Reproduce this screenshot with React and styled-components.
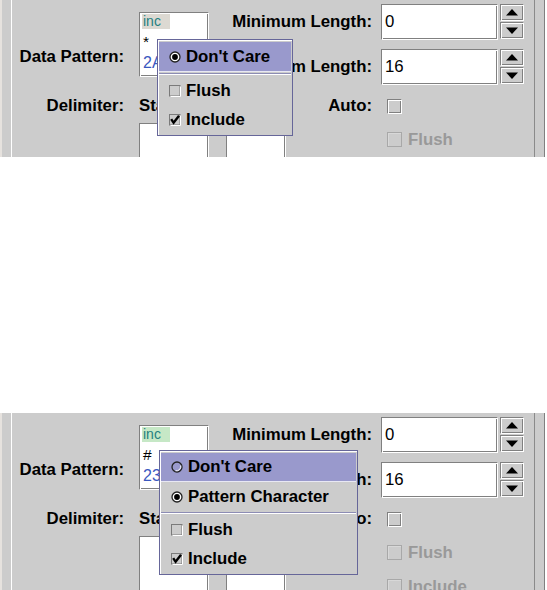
import React from "react";
import styled, { createGlobalStyle } from "styled-components";

const GlobalStyle = createGlobalStyle`
  html, body {
    margin: 0;
    padding: 0;
    background: #ffffff;
    overflow: hidden;
  }
  body {
    font-family: "Liberation Sans", Arial, sans-serif;
  }
`;

const flush3D = `
  border: 1px solid;
  border-color: #808080 #ffffff #ffffff #808080;
  box-shadow: inset 1px 1px #ffffff, inset -1px -1px #808080;
`;

const Page = styled.div`
  width: 547px;
  height: 590px;
  display: flex;
  flex-direction: column;
`;

const Gap = styled.div`
  height: ${(p) => p.$h}px;
  flex: none;
`;

const Panel = styled.div`
  position: relative;
  flex: none;
  height: ${(p) => p.$height}px;
  width: 545px;
  box-sizing: border-box;
  display: flex;
  background: #cccccc;
  border-left: 2px solid #e6e2de;
  border-right: 1px solid #808080;
  padding: 0 9px;
  overflow: hidden;
`;

const Frame = styled.div`
  width: 524px;
  box-sizing: border-box;
  border-left: 1px solid #ffffff;
  border-right: 1px solid #8a8a8a;
  padding-top: 4px;
`;

const FormGrid = styled.div`
  display: grid;
  grid-template-columns: 112px 15px 70px 17px 60px 86px 9px 143px;
  grid-template-rows: 36px 9px 36px 38px 33px 33px 60px;
`;

const Label = styled.div`
  grid-column: ${(p) => p.$col};
  grid-row: ${(p) => p.$row};
  align-self: ${(p) => (p.$top != null ? "start" : "center")};
  margin-top: ${(p) => p.$top || 0}px;
  padding-top: ${(p) => p.$pad || 0}px;
  text-align: ${(p) => p.$align || "right"};
  font-weight: bold;
  font-size: 16.8px;
  line-height: 20px;
  color: #000;
  white-space: nowrap;
`;

const ListBox = styled.div`
  grid-column: 3 / 4;
  grid-row: 1 / 4;
  align-self: start;
  margin-top: 8px;
  height: 65px;
  box-sizing: border-box;
  background: #ffffff;
  ${flush3D}
  padding: 1px 2px;
  display: flex;
  flex-direction: column;
  align-items: flex-start;
  overflow: hidden;
`;

const ListTag = styled.span`
  background: ${(p) => p.$bg};
  color: #1f8080;
  font-size: 14px;
  line-height: 15px;
  padding: 0 9px 0 1px;
`;

const ListChar = styled.span`
  margin-top: 4px;
  font-size: 15.5px;
  line-height: 17px;
  color: #000;
  padding-left: 1px;
`;

const ListHex = styled.span`
  margin-top: 4px;
  font-size: 16px;
  line-height: 17px;
  color: #3a58c0;
  padding-left: 1px;
`;

const DelimBox = styled.div`
  grid-column: ${(p) => p.$col};
  grid-row: 5 / 8;
  height: 100px;
  background: #ffffff;
  ${flush3D}
`;

const SpinnerRow = styled.div`
  grid-column: 8 / 9;
  grid-row: ${(p) => p.$row};
  display: flex;
  gap: 2px;
`;

const TextField = styled.div`
  width: 117px;
  height: 36px;
  box-sizing: border-box;
  background: #ffffff;
  ${flush3D}
  padding-left: 3px;
  display: flex;
  align-items: center;
  font-size: 16.8px;
  color: #000;
`;

const SpinButtons = styled.div`
  display: flex;
  flex-direction: column;
  gap: 1px;
  width: 24px;
`;

const SpinButton = styled.div`
  height: 17px;
  box-sizing: border-box;
  background: #cccccc;
  ${flush3D}
  display: flex;
  align-items: center;
  justify-content: center;
`;

const CheckRow = styled.div`
  grid-column: 8 / 9;
  grid-row: ${(p) => p.$row};
  align-self: center;
  margin-top: ${(p) => p.$shift || 0}px;
  padding-left: 6px;
  display: flex;
  align-items: center;
  gap: 6px;
`;

const CheckBox = styled.div`
  width: 15px;
  height: 15px;
  box-sizing: border-box;
  ${(p) =>
    p.$disabled
      ? "border: 1px solid #a8a8a8; box-shadow: inset 1px 1px #d8d8d8;"
      : flush3D}
`;

const CheckLabel = styled.span`
  font-weight: bold;
  font-size: 16.8px;
  color: ${(p) => (p.$disabled ? "#999999" : "#000")};
`;

const Popup = styled.div`
  position: absolute;
  left: ${(p) => p.$left}px;
  top: ${(p) => p.$top}px;
  width: ${(p) => p.$width}px;
  box-sizing: border-box;
  background: #cccccc;
  border: 1px solid #666699;
  box-shadow: inset 1px 1px #ffffff;
  padding: 2px 1px 1px 1px;
  z-index: 2;
`;

const MenuItem = styled.div`
  height: ${(p) => p.$h || 29}px;
  display: flex;
  align-items: center;
  gap: 5px;
  padding-left: 10px;
  background: ${(p) => (p.$selected ? "#9999cc" : "transparent")};
  border-bottom: ${(p) => (p.$selected ? "1px solid #e8e8f4" : "none")};
  box-sizing: border-box;
  font-weight: bold;
  font-size: 16.8px;
  color: #000;
  white-space: nowrap;
`;

const MenuSeparator = styled.div`
  margin: 1px 0;
  border-top: 1px solid #8c8cb4;
  border-bottom: 1px solid #ffffff;
`;

const Arrow = ({ up }) => (
  <svg width="12" height="7" viewBox="0 0 12 7">
    <polygon points={up ? "6,0 12,6.5 0,6.5" : "0,0.5 12,0.5 6,7"} fill="#000" />
  </svg>
);

const RadioIcon = ({ on }) => (
  <svg width="12" height="12" viewBox="0 0 12 12">
    <circle cx="6" cy="6" r="5" fill={on ? "#ffffff" : "none"} stroke="#222" strokeWidth="1.3" />
    {!on && <path d="M9.8 4.5 A4.6 4.6 0 0 1 4.5 9.8" fill="none" stroke="#fff" strokeWidth="1" />}
    {on && <circle cx="6" cy="6" r="2.9" fill="#000" />}
  </svg>
);

const CheckIcon = ({ on }) => (
  <svg width="12" height="12" viewBox="0 0 12 12">
    <rect x="0.5" y="0.5" width="10.5" height="10.5" fill="none" stroke="#7a7a7a" />
    <path d="M1.5 11.5 H11.5 V1.5" fill="none" stroke="#ffffff" />
    {on && (
      <path d="M2.2 5.2 L4.6 8.8 L10 1.8" fill="none" stroke="#000" strokeWidth="2.4" />
    )}
  </svg>
);

const Spinner = ({ row, value }) => (
  <SpinnerRow $row={row}>
    <TextField>{value}</TextField>
    <SpinButtons>
      <SpinButton>
        <Arrow up />
      </SpinButton>
      <SpinButton>
        <Arrow />
      </SpinButton>
    </SpinButtons>
  </SpinnerRow>
);

const PatternPanel = ({ height, tagBg, char, hex, popup }) => (
  <Panel $height={height}>
    <Frame>
      <FormGrid>
        <Label $col="1 / 2" $row="1 / 4" $top={43}>
          Data Pattern:
        </Label>
        <ListBox>
          <ListTag $bg={tagBg}>inc</ListTag>
          <ListChar>{char}</ListChar>
          <ListHex>{hex}</ListHex>
        </ListBox>

        <Label $col="5 / 7" $row="1 / 2">
          Minimum Length:
        </Label>
        <Spinner row="1 / 2" value="0" />
        <Label $col="5 / 7" $row="3 / 4">
          Maximum Length:
        </Label>
        <Spinner row="3 / 4" value="16" />

        <Label $col="1 / 2" $row="4 / 5" $pad={3}>
          Delimiter:
        </Label>
        <Label $col="3 / 4" $row="4 / 5" $pad={3} $align="left">
          Start
        </Label>
        <Label $col="5 / 6" $row="4 / 5" $pad={3} $align="left">
          End
        </Label>
        <Label $col="6 / 7" $row="4 / 5" $pad={3}>
          Auto:
        </Label>
        <CheckRow $row="4 / 5" $shift={4}>
          <CheckBox />
        </CheckRow>

        <DelimBox $col="3 / 4" />
        <DelimBox $col="5 / 6" />

        <CheckRow $row="5 / 6">
          <CheckBox $disabled />
          <CheckLabel $disabled>Flush</CheckLabel>
        </CheckRow>
        <CheckRow $row="6 / 7" $shift={2}>
          <CheckBox $disabled />
          <CheckLabel $disabled>Include</CheckLabel>
        </CheckRow>
      </FormGrid>
    </Frame>
    {popup}
  </Panel>
);

export default function App() {
  return (
    <Page>
      <GlobalStyle />
      <PatternPanel
        height={157}
        tagBg="#dcd9d2"
        char="*"
        hex="2A"
        popup={
          <Popup $left={155} $top={39} $width={136}>
            <MenuItem $selected $h={30}>
              <RadioIcon on />
              Don't Care
            </MenuItem>
            <MenuSeparator />
            <MenuItem>
              <CheckIcon />
              Flush
            </MenuItem>
            <MenuItem>
              <CheckIcon on />
              Include
            </MenuItem>
          </Popup>
        }
      />
      <Gap $h={256} />
      <PatternPanel
        height={190}
        tagBg="#c6e8c6"
        char="#"
        hex="23"
        popup={
          <Popup $left={157} $top={37} $width={199}>
            <MenuItem $selected>
              <RadioIcon />
              Don't Care
            </MenuItem>
            <MenuItem>
              <RadioIcon on />
              Pattern Character
            </MenuItem>
            <MenuSeparator />
            <MenuItem>
              <CheckIcon />
              Flush
            </MenuItem>
            <MenuItem>
              <CheckIcon on />
              Include
            </MenuItem>
          </Popup>
        }
      />
    </Page>
  );
}
